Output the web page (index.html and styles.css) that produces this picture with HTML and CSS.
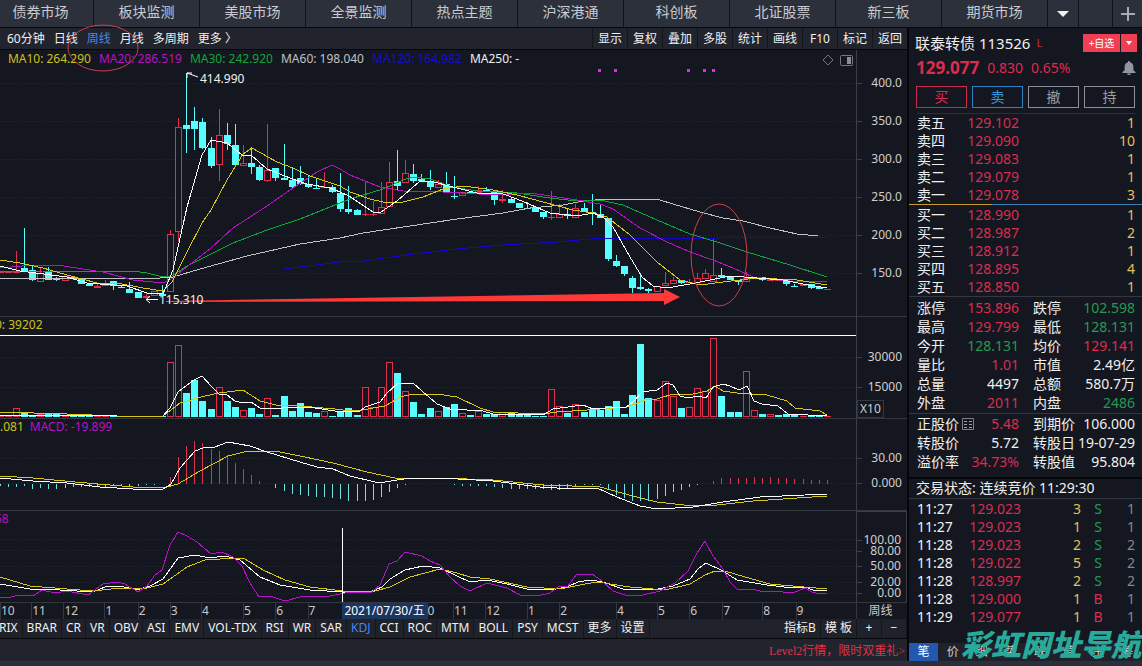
FILE: index.html
```html
<!DOCTYPE html>
<html lang="zh-CN">
<head>
<meta charset="utf-8">
<meta name="viewport" content="width=device-width, initial-scale=1">
<title>联泰转债 113526</title>
<link rel="stylesheet" href="styles.css">
</head>
<body>
<nav class="markets" aria-label="市场">
  <button class="market market-first">债券市场</button>
  <button class="market">板块监测</button>
  <button class="market">美股市场</button>
  <button class="market">全景监测</button>
  <button class="market">热点主题</button>
  <button class="market">沪深港通</button>
  <button class="market">科创板</button>
  <button class="market">北证股票</button>
  <button class="market">新三板</button>
  <button class="market">期货市场</button>
  <button class="market-tool" aria-label="更多市场"><svg width="12" height="6" viewBox="0 0 12 6"><path d="M0 0H12L6 6Z" fill="#f2f2f2"/></svg></button>
  <span class="market-tool"></span>
  <button class="market-tool" aria-label="添加"><svg width="14" height="14" viewBox="0 0 14 14"><path d="M7 0V14M0 7H14" stroke="#a9acb3" stroke-width="2"/></svg></button>
</nav>

<main class="workspace">
  <section class="chart">
    <div class="toolbar">
      <div class="periods">
        <button>60分钟</button><button>日线</button><button class="active">周线</button><button>月线</button><button>多周期</button><button>更多 〉</button>
      </div>
      <div class="tools">
        <button>显示</button><button>复权</button><button>叠加</button><button>多股</button><button>统计</button><button>画线</button><button>F10</button><button>标记</button><button>返回</button>
      </div>
      <svg class="mark" viewBox="0 0 72 48" aria-hidden="true"><ellipse cx="36" cy="24" rx="35" ry="23"/></svg>
    </div>

    <div class="panes">
      <div class="pane">
        <div class="plot">
          <svg id="price" viewBox="0 50 856 266" preserveAspectRatio="none"></svg>
          <div class="legend legend-wide">
            <span class="white cut">8</span><span class="yellow">MA10: 264.290</span><span class="magenta">MA20: 286.519</span><span class="green">MA30: 242.920</span><span class="grey">MA60: 198.040</span><span class="blue">MA120: 164.982</span><span class="white">MA250: -</span>
          </div>
          <div class="pane-icons">
            <svg width="12" height="12" viewBox="0 0 12 12"><path d="M6 1L11 6L6 11L1 6Z" fill="none" stroke="#74777d"/></svg>
            <svg width="13" height="11" viewBox="0 0 13 11"><rect x=".5" y=".5" width="12" height="10" rx="1" fill="none" stroke="#74777d"/><rect x="7" y="2" width="4" height="7" fill="#8b8e94"/></svg>
          </div>
          <span class="note note-high">414.990</span>
          <span class="note note-low">115.310</span>
        </div>
        <div class="axis" data-from="50" data-to="316" data-labels="400.0@83 350.0@121 300.0@159 250.0@197 200.0@235 150.0@273"></div>
      </div>
      <div class="pane">
        <div class="plot">
          <svg id="volume" viewBox="0 317 856 101" preserveAspectRatio="none"></svg>
          <div class="legend"><span class="yellow cut">0: 39202</span></div>
        </div>
        <div class="axis" data-from="317" data-to="418" data-labels="30000@357 15000@387"><span class="unit">X10</span></div>
      </div>
      <div class="pane">
        <div class="plot">
          <svg id="macd" viewBox="0 419 856 91" preserveAspectRatio="none"></svg>
          <div class="legend"><span class="yellow">.081</span><span class="magenta">MACD: -19.899</span></div>
        </div>
        <div class="axis" data-from="419" data-to="510" data-labels="30.00@458 0.000@483"></div>
      </div>
      <div class="pane">
        <div class="plot">
          <svg id="kdj" viewBox="0 511 856 91" preserveAspectRatio="none"></svg>
          <div class="legend"><span class="magenta cut">58</span></div>
        </div>
        <div class="axis axis-box" data-from="511" data-to="602" data-labels="100.00@539 80.00@550 50.00@566 20.00@582 0.00@593"></div>
      </div>
    </div>

    <div class="time">
      <div class="months" id="months"><span class="date">2021/07/30/五</span></div>
      <div class="time-period">周线</div>
    </div>

    <div class="indicators">
      <button class="cut-start">RIX</button><button>BRAR</button><button>CR</button><button>VR</button><button>OBV</button><button>ASI</button><button>EMV</button><button>VOL-TDX</button><button>RSI</button><button>WR</button><button>SAR</button><button class="active">KDJ</button><button>CCI</button><button>ROC</button><button>MTM</button><button>BOLL</button><button>PSY</button><button>MCST</button><button>更多</button><button>设置</button>
      <span class="spacer"></span>
      <button>指标B</button><button>模 板</button><button class="zoom">+</button><button class="zoom">−</button>
    </div>
    <div class="status"><a href="#">Level2行情，限时双重礼&gt;</a></div>
  </section>

  <aside class="quote">
    <div class="name">
      <h1>联泰转债 113526</h1><sup>L</sup>
      <div class="watch"><button>+自选</button><button aria-label="自选列表"><svg width="6" height="4" viewBox="0 0 6 4"><path d="M0 0H6L3 4Z" fill="#fff"/></svg></button></div>
    </div>
    <div class="last">
      <strong>129.077</strong><span>0.830</span><span>0.65%</span>
      <button aria-label="提醒"><svg width="14" height="14" viewBox="0 0 14 14"><path d="M7 0a1.3 1.3 0 0 1 1.2 1.3C10.300 2 11.400 3.700 11.400 6v3.200L13.500 11v1H.5v-1l2.100-1.800V6c0-2.300 1.100-4 3.200-4.700A1.300 1.300 0 0 1 7 0ZM5 12.500h4a2 1.500 0 0 1-4 0Z" fill="#8f96a6"/></svg></button>
    </div>
    <div class="trade"><button class="buy">买</button><button class="sell">卖</button><button>撤</button><button>持</button></div>

    <table class="depth">
      <tbody>
        <tr><th>卖五</th><td class="up">129.102</td><td class="gold">1</td></tr>
        <tr><th>卖四</th><td class="up">129.090</td><td class="gold">10</td></tr>
        <tr><th>卖三</th><td class="up">129.083</td><td class="gold">1</td></tr>
        <tr><th>卖二</th><td class="up">129.079</td><td class="gold">1</td></tr>
        <tr><th>卖一</th><td class="up">129.078</td><td class="gold">3</td></tr>
      </tbody>
    </table>
    <div class="ratio"></div>
    <table class="depth">
      <tbody>
        <tr><th>买一</th><td class="up">128.990</td><td class="gold">1</td></tr>
        <tr><th>买二</th><td class="up">128.987</td><td class="gold">2</td></tr>
        <tr><th>买三</th><td class="up">128.912</td><td class="gold">1</td></tr>
        <tr><th>买四</th><td class="up">128.895</td><td class="gold">4</td></tr>
        <tr><th>买五</th><td class="up">128.850</td><td class="gold">1</td></tr>
      </tbody>
    </table>
    <div class="block">
      <table class="stats">
        <tbody>
          <tr><th>涨停</th><td class="up">153.896</td><th>跌停</th><td class="down">102.598</td></tr>
          <tr><th>最高</th><td class="up">129.799</td><th>最低</th><td class="down">128.131</td></tr>
          <tr><th>今开</th><td class="down">128.131</td><th>均价</th><td class="up">129.141</td></tr>
          <tr><th>量比</th><td class="up">1.01</td><th>市值</th><td>2.49亿</td></tr>
          <tr><th>总量</th><td>4497</td><th>总额</th><td>580.7万</td></tr>
          <tr><th>外盘</th><td class="up">2011</td><th>内盘</th><td class="down">2486</td></tr>
        </tbody>
      </table>
    </div>
    <div class="block">
      <table class="stats">
        <tbody>
          <tr><th>正股价<svg class="list-icon" width="12" height="12" viewBox="0 0 12 12"><path d="M.5.5H11.500V11.500H.5Z" fill="none" stroke="#7c7f86"/><path d="M2 3.500H5M2 6.500H5M2 9.500H5M7 3.500H10M7 6.500H10M7 9.500H10" fill="none" stroke="#9a9da3"/></svg></th><td class="up">5.48</td><th>到期价</th><td>106.000</td></tr>
          <tr><th>转股价</th><td>5.72</td><th>转股日</th><td>19-07-29</td></tr>
          <tr><th>溢价率</th><td class="up">34.73%</td><th>转股值</th><td>95.804</td></tr>
        </tbody>
      </table>
    </div>
    <h2 class="state">交易状态: 连续竞价 11:29:30</h2>
    <table class="ticks">
      <tbody>
        <tr><td>11:27</td><td class="up">129.023</td><td class="gold">3</td><td class="down">S</td><td>1</td></tr>
        <tr><td>11:27</td><td class="up">129.023</td><td class="gold">1</td><td class="down">S</td><td>1</td></tr>
        <tr><td>11:28</td><td class="up">129.023</td><td class="gold">2</td><td class="down">S</td><td>2</td></tr>
        <tr><td>11:28</td><td class="up">129.022</td><td class="gold">5</td><td class="down">S</td><td>2</td></tr>
        <tr><td>11:28</td><td class="up">128.997</td><td class="gold">2</td><td class="down">S</td><td>2</td></tr>
        <tr><td>11:28</td><td class="up">129.000</td><td class="gold">1</td><td class="up">B</td><td>1</td></tr>
        <tr><td>11:29</td><td class="up">129.077</td><td class="gold">1</td><td class="up">B</td><td>1</td></tr>
      </tbody>
    </table>
    <div class="views">
      <button class="current">笔</button><button>价</button><button>细</button><button>势</button><button>联</button><button>值</button><button>主</button><button>筹</button>
    </div>
    <div class="watermark">彩虹网址导航</div>
  </aside>
</main>
<script src="chart.js"></script>
</body>
</html>
```

FILE: styles.css
```css
* { box-sizing: border-box; }

body {
  margin: 0;
  height: 100vh;
  display: flex;
  flex-direction: column;
  overflow: hidden;
  background: #14171f;
  border-bottom: 5px solid #2b2f3b;
  color: #f0f0f0;
  font: 12px/16px "Noto Sans", "Noto Sans CJK SC", sans-serif;
  white-space: nowrap;
}

button {
  margin: 0;
  padding: 0;
  border: 0;
  background: none;
  color: inherit;
  font: inherit;
  white-space: nowrap;
}

h1, h2 { margin: 0; font-weight: 400; }

.white { color: #f0f0f0; }
.yellow { color: #cfc021; }
.magenta { color: #b414c4; }
.green { color: #12a53c; }
.grey { color: #c2c2c2; }
.blue { color: #140cd4; }
.up { color: #dc2c50; }
.down { color: #249a52; }
.gold { color: #e6bf5c; }

/* market tabs */
.markets {
  display: flex;
  height: 28px;
  background: #2c303b;
  border-bottom: 1px solid #08090c;
  color: #c9cbd0;
  font-size: 14px;
}
.market { flex: 105 1 0; min-width: 0; border-right: 1px solid #101218; padding-bottom: 4px; }
.market-first { flex-grow: 81; padding-right: 12px; }
.market-tool {
  flex: 0 0 34px;
  display: flex;
  align-items: center;
  justify-content: center;
  border-right: 1px solid #101218;
}
.market-tool:last-child { flex-basis: 29px; border-right: 0; }
.market-tool:nth-last-child(3) { flex-basis: 31px; }

.workspace { flex: 1; min-height: 0; display: grid; grid-template-columns: minmax(0, 1fr) 235px; }

/* chart column */
.chart { display: flex; flex-direction: column; min-height: 0; min-width: 0; }
.toolbar {
  position: relative;
  display: flex;
  justify-content: space-between;
  height: 22px;
  background: #21242d;
  border-bottom: 1px solid #060709;
}
.periods { display: flex; gap: 9px; padding-left: 7px; }
.tools { display: flex; }
.tools button { width: 35px; border-left: 1px solid #14161c; }
.active { color: #4a86e8; }
.mark { position: absolute; left: 67px; top: -4px; width: 72px; height: 48px; z-index: 2; }
.mark ellipse, .ring { fill: none; stroke: #c8404c; stroke-width: 1; }

.panes {
  flex: 1;
  min-height: 0;
  display: grid;
  grid-template-rows: minmax(0, 267fr) minmax(0, 102fr) minmax(0, 92fr) minmax(0, 92fr);
}
.pane {
  display: grid;
  grid-template-columns: minmax(0, 1fr) 51px;
  grid-template-rows: minmax(0, 1fr);
  border-bottom: 1px solid #343740;
}
.plot { position: relative; min-height: 0; overflow: hidden; }
.plot > svg { display: block; width: 100%; height: 100%; }
.legend { position: absolute; left: 0; top: 0; display: flex; gap: 6px; }
.legend-wide { top: 1px; gap: 8px; }
.cut { margin-left: -5px; }
.legend-wide .cut { margin-left: -7px; }
.pane-icons { position: absolute; right: 3px; top: 4px; display: flex; align-items: center; gap: 6px; }
.note { position: absolute; }
.note-high { left: 200px; top: 21px; }
.note-low { left: 159px; bottom: 8px; }

.axis { position: relative; border-left: 1px solid #3c3f47; color: #cfcfcf; }
.axis-box { border: 1px solid #3c3f47; border-bottom: 0; }
.axis-label { position: absolute; right: 5px; transform: translateY(-50%); }
.axis-tick { position: absolute; left: 0; width: 5px; border-top: 1px solid #3c3f47; }
.unit { position: absolute; left: 0; bottom: 0; padding: 0 2px; border: 1px solid #33363e; }

.time { display: grid; grid-template-columns: minmax(0, 1fr) 51px; height: 16px; color: #c8c8c8; }
.months { position: relative; display: flex; min-width: 0; }
.month { flex-basis: 0; min-width: 0; border-left: 1px solid #343740; }
.date { position: absolute; left: 40%; top: 0; padding: 0 2px; background: #1b365e; color: #fff; z-index: 1; }
.time-period { border-left: 1px solid #343740; text-align: center; padding-right: 3px; }

.indicators { display: flex; height: 20px; background: #1f222a; border-bottom: 1px solid #050608; }
.indicators button { padding: 0 4px 2px; border-right: 1px solid #14161c; }
.indicators .cut-start { margin-left: -5px; }
.indicators .zoom { width: 25px; }
.spacer { flex: 1; }
.status { height: 22px; padding-top: 4px; background: #21242d; text-align: right; }
.status a {
  padding-right: 2px;
  color: #e03048;
  font: 12px/16px "Liberation Serif", "Noto Sans CJK TC", serif;
  text-decoration: none;
}

/* svg marks */
.series { fill: none; stroke-width: 1; shape-rendering: crispEdges; }
.crisp { shape-rendering: crispEdges; }
.grid { stroke: #262a33; stroke-dasharray: 1 2; }

/* quote column */
.quote {
  position: relative;
  display: flex;
  flex-direction: column;
  overflow: hidden;
  border-left: 2px solid #050608;
  font-size: 14px;
}
.name { display: flex; align-items: center; height: 30px; padding: 0 5px 0 6px; }
.name h1 { font-size: 15px; line-height: 20px; }
.name sup { margin-left: 6px; color: #c0392b; font-size: 11px; line-height: 12px; }
.watch { display: flex; gap: 1px; margin-left: auto; }
.watch button { height: 18px; width: 16px; background: #ef3f52; color: #fff; font-size: 10px; line-height: 18px; }
.watch button:first-child { width: 37px; }
.watch button svg { display: block; margin: 0 auto; }
.last { display: flex; align-items: center; gap: 8px; height: 20px; padding: 0 6px 0 7px; color: #dc2c50; }
.last strong { font-size: 17px; }
.last button { margin-left: auto; line-height: 0; }
.trade { display: flex; gap: 5px; margin: 8px 7px 5px; }
.trade button { flex: 1; height: 22px; border: 1px solid #8b8e94; color: #9b9ea4; line-height: 18px; }
.trade .buy { border-color: #c82b4c; color: #dc2c50; }
.trade .sell { border-color: #2f7fc4; color: #3b95dc; }

table { border-collapse: collapse; table-layout: fixed; width: 218px; margin: 0 7px 0 8px; }
th, td { padding: 0; font-weight: 400; text-align: left; overflow: visible; }
.depth td, .stats td { text-align: right; }
.depth tr, .ticks tr { height: 18px; }
.depth th { width: 48px; }
.depth td:nth-child(2) { width: 54px; }
.trade + .depth { border-top: 1px solid #2c2f38; }
.ratio { height: 1px; margin-bottom: 1px; background: linear-gradient(90deg, #c99a2e 83px, #3b80b8 83px); }
.block { border-top: 1px solid #343740; padding-top: 2px; }
.block + .block { padding: 1px 0 5px; }
.stats tr { height: 19px; }
.stats th { width: 48px; }
.stats td { width: 54px; }
.stats th:nth-child(3) { width: 58px; padding-left: 14px; }
.stats td:nth-child(4) { width: 58px; }
.list-icon { margin-left: 3px; vertical-align: -1px; }
.state {
  height: 22px;
  margin-bottom: 1px;
  padding-left: 7px;
  border-top: 2px solid #050608;
  border-bottom: 1px solid #343740;
  font-size: 14px;
  line-height: 18px;
}
.ticks td:nth-child(1) { width: 48px; }
.ticks td:nth-child(2) { width: 56px; text-align: right; }
.ticks td:nth-child(3) { width: 60px; text-align: right; }
.ticks td:nth-child(4) { width: 34px; text-align: center; }
.ticks td:nth-child(5) { color: #85888e; text-align: right; }
.views { display: flex; height: 18px; margin-top: auto; background: #1f222a; font-size: 12px; color: #d0d0d0; }
.views button { flex: 1; }
.views .current { background: #2457ae; color: #fff; }
.watermark {
  position: absolute;
  left: 52px;
  bottom: 0;
  color: #27aa9c;
  font: italic 900 30px/36px "Noto Sans CJK SC", sans-serif;
}
```

FILE: chart.js
```js
const NS = 'http://www.w3.org/2000/svg';
const UP = '#e0304f';
const DOWN = '#55ffff';
const $ = (id) => document.getElementById(id);
const at = (k) => Math.floor(24.5 + 8.11 * k) + 0.5;

function draw(svg, tag, attrs) {
  const el = document.createElementNS(NS, tag);
  for (const name in attrs) el.setAttribute(name, attrs[name]);
  svg.appendChild(el);
}
function grid(svg, ys) {
  ys.forEach((y) => draw(svg, 'path', { d: `M0 ${y}.5H856`, class: 'grid' }));
}
function line(svg, stroke, points) {
  draw(svg, 'polyline', { points, stroke, class: 'series' });
}
function block(svg, k, top, bottom, up) {
  const x = at(k);
  const h = Math.max(bottom - top, 1);
  if (up && h > 2) {
    draw(svg, 'rect', { x: x - 3, y: top + 0.5, width: 6, height: h - 1, fill: '#14171f', stroke: UP, class: 'crisp' });
  } else {
    draw(svg, 'rect', { x: x - 3.5, y: top, width: 7, height: h, fill: up ? UP : DOWN, class: 'crisp' });
  }
}

// index, direction (1 rising), high, body top, body bottom, low
const candles = `-3 1 272 272 273 273|-2 1 272 272 273 273|-1 1 251 271 273 273|0 0 228 268 271 271|1 0 266 270 280 281|2 1 267 273 282 282|3 0 267 271 280 280|4 0 277 279 280 281|5 1 276 276 281 281|6 0 276 277 279 280|7 0 279 279 284 284|8 0 284 284 286 286|9 1 284 286 288 288|10 1 280 285 286 286|11 0 281 281 286 290|12 0 286 287 288 288|13 0 282 289 293 293|14 0 292 292 298 298|15 1 293 296 298 298|16 1 291 291 296 296|17 0 285 294 296 296|18 1 230 234 292 292|19 1 118 127 232 242|20 0 73 125 129 153|21 0 107 121 129 150|22 0 118 122 148 149|23 0 137 148 166 168|24 1 109 135 165 181|25 0 123 135 144 150|26 0 124 145 165 165|27 1 145 163 166 166|28 0 147 163 167 174|29 0 165 167 180 181|30 1 124 170 181 182|31 0 168 168 178 181|32 0 144 178 180 180|33 0 168 180 187 189|34 0 166 178 184 185|35 0 175 184 187 188|36 0 178 188 189 189|37 1 172 187 188 188|38 0 185 187 192 193|39 0 173 193 209 212|40 0 186 209 212 214|41 0 209 210 215 215|42 1 182 214 215 216|43 1 201 214 215 216|44 1 182 207 214 214|45 1 162 182 207 207|46 0 150 181 186 190|47 1 160 173 183 183|48 0 164 174 181 183|49 0 174 179 181 181|50 0 170 181 187 190|51 1 180 184 188 188|52 0 172 184 193 193|53 0 176 196 197 199|54 1 192 192 196 196|55 0 192 192 194 194|56 1 186 190 193 193|57 0 187 190 192 192|58 0 191 191 200 205|59 1 190 199 201 203|60 0 198 199 203 203|61 0 203 203 208 208|62 0 202 208 209 209|63 0 208 208 212 212|64 0 212 212 217 219|65 1 191 217 218 220|66 1 204 214 218 218|67 0 209 214 216 219|68 1 204 208 218 218|69 0 203 208 212 212|70 0 194 212 214 225|71 0 205 214 218 218|72 0 218 218 259 261|73 0 255 261 266 267|74 0 266 266 274 276|75 0 276 278 288 293|76 0 273 287 289 290|77 0 288 289 291 293|78 1 286 286 292 292|79 1 272 283 286 286|80 1 277 280 284 284|81 0 280 280 283 284|82 1 279 282 283 283|83 1 273 278 283 283|84 1 269 273 279 279|85 1 238 275 282 282|86 0 268 275 277 277|87 0 276 277 280 280|88 0 280 280 282 285|89 1 272 278 282 282|91 0 277 277 280 281|92 1 279 279 281 281|93 1 280 280 281 281|94 0 281 281 284 286|95 0 284 286 287 287|96 1 284 284 286 286|97 0 284 284 288 289|98 0 286 287 289 289|99 1 289 289 290 290`;

const price = $('price');
grid(price, [83, 121, 159, 197, 235, 273]);
candles.split('|').forEach((row) => {
  const [k, up, high, top, bottom, low] = row.split(' ').map(Number);
  draw(price, 'path', { d: `M${at(k)} ${high}V${low}`, stroke: up ? UP : DOWN, class: 'crisp' });
  block(price, k, top, bottom, up);
});
line(price, '#c2c2c2', '0,278 160,278 173,277 200,269 247,256 300,244 340,238 363,233 410,226 457,219 503,213 530,208 563,205 583,201 607,199 653,199 660,200 673,204 700,212 723,218 743,221 770,228 797,234 818,236');
line(price, '#1408c8', '283,269 340,262 363,261 413,254 457,249 503,245 557,242 590,239 630,238 703,239 733,237 827,238');
line(price, '#12a53c', '0,272 43,271 133,271 147,273 163,277 172,276 187,266 233,243 267,230 300,219 340,203 350,199 383,189 403,180 413,177 430,179 453,187 477,191 517,193 550,198 577,201 600,200 623,205 657,220 690,234 717,242 747,252 790,265 827,277');
line(price, '#b414c4', '0,268 33,265 57,265 83,269 103,272 133,280 163,283 173,278 193,262 211,248 233,228 267,206 293,188 317,172 332,165 340,169 350,175 380,187 403,191 443,192 497,195 530,193 557,197 577,200 600,204 613,209 640,228 667,242 690,252 713,260 733,268 753,277 790,281 827,282');
line(price, '#d9c81c', '0,260 20,263 43,268 67,275 97,283 117,283 143,288 163,291 172,282 187,252 202,223 211,210 227,180 243,154 252,148 277,162 293,168 310,176 340,186 350,192 370,199 383,202 403,202 423,197 443,189 463,186 493,190 517,195 543,202 573,210 593,213 607,217 630,235 657,262 680,280 700,285 723,282 757,278 797,280 827,285');
line(price, '#ffffff', '0,266 20,271 67,277 87,283 127,286 147,293 163,294 168,282 173,270 187,207 202,155 211,140 227,143 242,155 251,155 267,169 290,178 307,184 330,188 340,192 349,196 373,212 381,212 397,201 420,181 430,181 453,187 477,193 503,194 517,199 550,213 577,216 593,213 603,217 613,227 630,257 642,277 653,286 667,288 690,284 730,276 757,278 783,280 803,284 827,288');
draw(price, 'path', { d: 'M187 73L198 77M187 78V73H192M146 299.500H158M150 296L146 299.500L150 303', fill: 'none', stroke: '#fff' });
draw(price, 'path', { d: 'M166 301L664 293V289L680 297L664 305V301L166 302Z', fill: '#ff3838' });
draw(price, 'ellipse', { cx: 719, cy: 255, rx: 28, ry: 51, class: 'ring' });
[598, 614, 687, 703, 712].forEach((x) => draw(price, 'rect', { x, y: 69, width: 3, height: 3, fill: '#e22ae2' }));

// index and bar top; r marks a rising week
const volumes = '-3 415r|-2 415r|-1 408r|0 412|1 416|2 414r|3 413|4 414|5 415r|6 416|7 416|8 416|9 416r|10 416r|11 416|12 416|13 416|14 416|15 416r|16 416r|17 416|18 362r|19 345r|20 393|21 380|22 401|23 409|24 387r|25 401|26 407|27 410r|28 408|29 414|30 398r|31 415|32 396|33 411|34 403|35 412|36 413|37 411r|38 416|39 411|40 408|41 415|42 387r|43 407r|44 387r|45 362r|46 373|47 391r|48 402|49 414|50 408|51 411r|52 407|53 404|54 413r|55 415|56 411r|57 414|58 414|59 412r|60 413|61 414|62 414|63 416|64 416|65 389r|66 406r|67 413|68 404r|69 412|70 410|71 410|72 406|73 401|74 414|75 395|76 344|77 398|78 400r|79 381r|80 396r|81 408|82 407r|83 388r|84 391r|85 338r|86 396|87 412|88 412|89 371r|90 410r|91 414|92 414r|93 415|94 414|95 414|96 416r|97 416|98 416|99 416r';
const volume = $('volume');
grid(volume, [357, 387]);
volumes.split('|').forEach((row) => {
  const [k, top] = row.split(' ');
  block(volume, Number(k), parseInt(top, 10), 417, top.endsWith('r'));
});
draw(volume, 'path', { d: 'M0 335.500H856', stroke: '#fff' });
line(volume, '#d9c81c', '0,412 67,414 117,416 163,416 180,403 205,396 219,393 243,390 260,401 276,405 300,406 335,409 350,411 362,410 385,406 392,402 400,397 413,394 425,395 437,394 457,397 480,408 493,412 543,414 557,412 587,410 627,407 647,399 657,399 673,394 693,394 707,391 715,386 723,391 737,393 767,395 787,401 795,408 820,411 827,415');
line(volume, '#ffffff', '0,415 117,416 163,416 170,408 178,392 186,386 194,380 202,376 211,386 219,394 227,395 235,401 243,403 251,402 260,408 276,409 290,407 315,408 335,411 347,412 360,411 365,407 380,402 387,393 397,384 413,383 422,391 437,404 450,409 483,411 493,414 543,415 553,409 583,405 593,409 620,407 625,408 633,402 642,392 657,390 667,383 673,385 680,396 688,398 698,396 706,398 713,387 723,384 730,386 739,390 747,386 754,401 762,404 778,406 788,414 827,416');

const macd = $('macd');
grid(macd, [458, 483]);
const macdBars = [
  [-3, [486, 487, 487, 486, 489, 488, 489, 489, 488, 487, 487, 487, 487, 487, 486, 486, 486, 486, 485, 485, 484, 477, 457, 446, 441, 443, 449, 451, 455, 463, 469, 475, 481]],
  [31, [488, 491, 494, 495, 496, 497, 497, 498, 499, 501, 501, 501, 500, 497, 492, 488, 485]],
  [53, [485, 486, 486, 486, 486, 487, 488, 489, 489, 489, 489, 489, 490, 490, 488, 487, 485, 485, 485, 490, 495, 498, 501, 501, 501, 499, 496, 492, 490, 487, 485]],
  [85, [481, 478, 478, 478, 478, 477, 478, 477, 478, 478, 479, 479, 480, 480, 480]]
];
macdBars.forEach(([start, ends]) => ends.forEach((y, i) => {
  draw(macd, 'path', { d: `M${at(start + i)} 484V${y}`, stroke: y < 484 ? UP : '#6fe3e3', class: 'crisp' });
}));
line(macd, '#d9c81c', '0,476 33,478 75,482 133,487 163,488 178,484 200,471 228,456 248,451 275,451 300,456 333,463 367,472 395,478 440,478 493,480 543,485 600,487 633,496 657,502 693,506 717,505 753,501 827,496');
line(macd, '#ffffff', '0,478 33,481 67,483 100,487 133,489 163,489 171,484 180,468 195,451 203,448 215,447 228,442 250,446 267,452 300,462 317,467 333,469 350,476 375,482 385,482 410,478 440,478 493,481 540,487 573,489 597,488 617,497 640,506 657,509 693,507 723,502 760,497 827,494');

const kdj = $('kdj');
grid(kdj, [539, 550, 566, 582, 593]);
line(kdj, '#ffffff', '0,584 30,589 60,590 93,592 105,587 120,586 137,590 150,586 163,579 178,558 195,555 210,558 225,556 240,560 260,577 280,585 310,590 343,592 370,592 382,587 390,579 405,570 423,566 440,568 457,576 470,582 487,580 507,584 527,589 550,590 567,587 578,582 590,580 603,582 623,589 653,590 673,586 690,579 698,569 706,563 723,571 737,580 767,585 793,588 805,587 813,590 827,590');
line(kdj, '#d9c81c', '0,577 30,586 67,589 93,591 120,588 147,588 163,584 187,567 205,560 235,558 245,559 263,570 285,580 310,587 343,591 375,591 390,587 410,577 440,569 457,573 470,577 490,579 527,587 560,589 585,584 597,582 630,587 665,590 690,584 705,575 715,571 725,571 745,577 770,584 827,589');
line(kdj, '#b414c4', '0,597 8,598 18,595 33,596 42,590 55,593 67,591 88,595 103,584 117,582 125,584 138,592 147,586 155,575 162,570 170,545 178,532 187,536 197,542 211,554 222,552 233,557 242,566 250,583 259,597 270,596 285,601 300,597 330,596 345,593 372,592 380,585 389,564 397,561 405,552 422,556 430,561 440,565 450,577 460,586 470,591 487,583 507,588 520,595 537,596 550,593 558,587 568,586 577,574 592,574 602,581 613,591 625,595 643,595 660,591 675,583 688,571 697,553 705,541 713,556 723,569 730,582 738,590 753,589 763,592 772,591 793,593 805,588 812,592 820,594 827,593');
draw(kdj, 'path', { d: 'M342.500 528V602', stroke: '#fff' });

// value axes
document.querySelectorAll('.axis').forEach((axis) => {
  const { from, to, labels } = axis.dataset;
  labels.split(' ').forEach((item) => {
    const [text, y] = item.split('@');
    const top = `${((y - from) / (to - from)) * 100}%`;
    const label = document.createElement('span');
    label.className = 'axis-label';
    label.textContent = text;
    const tick = document.createElement('i');
    tick.className = 'axis-tick';
    label.style.top = tick.style.top = top;
    axis.append(tick, label);
  });
});

// month label and the share of the time axis it spans
[['10', 31], ['11', 32], ['12', 41], ['1', 33], ['2', 32], ['3', 31], ['4', 42], ['5', 32], ['6', 32], ['7', 36], ['', 84], ['0', 26], ['11', 32], ['12', 42], ['1', 32], ['2', 57], ['4', 41], ['5', 32], ['6', 33], ['7', 40], ['8', 33], ['9', 61]].forEach(([text, span]) => {
  const month = document.createElement('div');
  month.className = 'month';
  month.style.flexGrow = span;
  month.textContent = text;
  $('months').appendChild(month);
});
```
